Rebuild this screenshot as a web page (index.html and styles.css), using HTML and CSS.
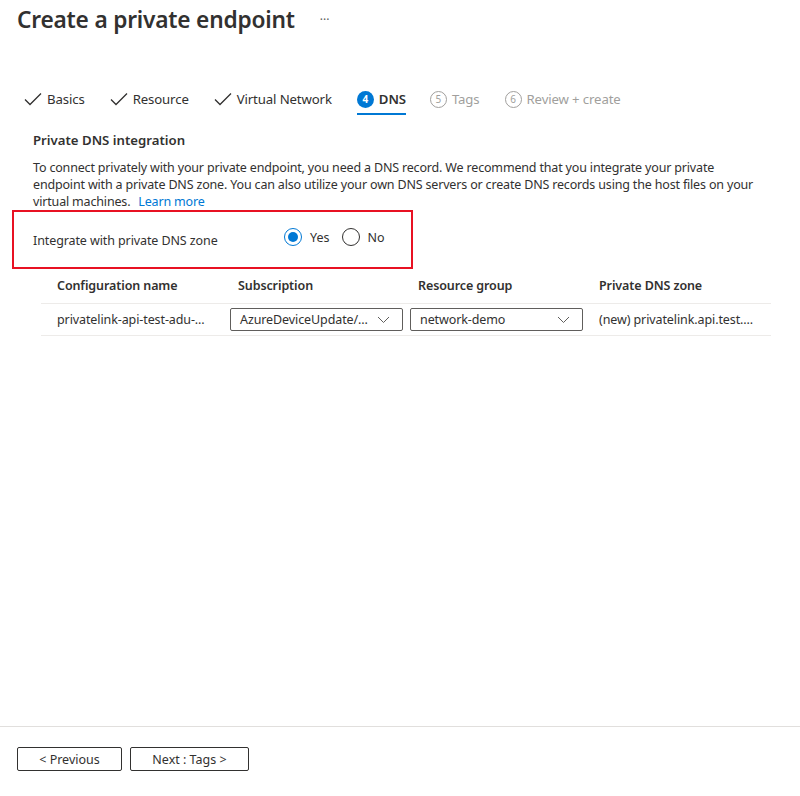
FILE: index.html
```html
<!DOCTYPE html>
<html>
<head>
<meta charset="utf-8">
<link rel="stylesheet" href="styles.css">
</head>
<body>
<div class="page">
  <main class="main">
    <header class="header">
      <h1 class="title">Create a private endpoint</h1>
      <span class="more">···</span>
    </header>
    <nav class="tabs">
      <div class="tab done"><svg class="check" width="18" height="14" viewBox="0 0 18 14"><path d="M1 7.5 L6 12.5 L17 1.5" fill="none" stroke="#323130" stroke-width="1.3"/></svg><span>Basics</span></div>
      <div class="tab done"><svg class="check" width="18" height="14" viewBox="0 0 18 14"><path d="M1 7.5 L6 12.5 L17 1.5" fill="none" stroke="#323130" stroke-width="1.3"/></svg><span>Resource</span></div>
      <div class="tab done"><svg class="check" width="18" height="14" viewBox="0 0 18 14"><path d="M1 7.5 L6 12.5 L17 1.5" fill="none" stroke="#323130" stroke-width="1.3"/></svg><span>Virtual Network</span></div>
      <div class="tab active"><span class="num">4</span><span>DNS</span></div>
      <div class="tab todo"><span class="num">5</span><span>Tags</span></div>
      <div class="tab todo"><span class="num">6</span><span>Review + create</span></div>
    </nav>
    <section class="content">
      <h2 class="section-title">Private DNS integration</h2>
      <p class="desc">To connect privately with your private endpoint, you need a DNS record. We recommend that you integrate your private endpoint with a private DNS zone. You can also utilize your own DNS servers or create DNS records using the host files on your virtual machines.<a class="link" href="#">Learn more</a></p>
      <div class="highlight">
        <span class="label">Integrate with private DNS zone</span>
        <div class="radios">
          <label class="radio"><span class="dot checked"></span><span>Yes</span></label>
          <label class="radio"><span class="dot"></span><span>No</span></label>
        </div>
      </div>
      <div class="table">
        <div class="row head">
          <div class="cell c1">Configuration name</div>
          <div class="cell c2">Subscription</div>
          <div class="cell c3">Resource group</div>
          <div class="cell c4">Private DNS zone</div>
        </div>
        <div class="row body-row">
          <div class="cell c1">privatelink-api-test-adu-...</div>
          <div class="cell c2"><div class="select"><span>AzureDeviceUpdate/...</span><svg width="13" height="8" viewBox="0 0 13 8"><path d="M1 1 L6.5 6.5 L12 1" fill="none" stroke="#605e5c" stroke-width="1"/></svg></div></div>
          <div class="cell c3"><div class="select"><span>network-demo</span><svg width="13" height="8" viewBox="0 0 13 8"><path d="M1 1 L6.5 6.5 L12 1" fill="none" stroke="#605e5c" stroke-width="1"/></svg></div></div>
          <div class="cell c4">(new) privatelink.api.test....</div>
        </div>
      </div>
    </section>
  </main>
  <footer class="footer">
    <button class="btn prev">&lt; Previous</button>
    <button class="btn next">Next : Tags &gt;</button>
  </footer>
</div>
</body>
</html>
```
FILE: styles.css
```css
* { box-sizing: border-box; }
html, body { margin: 0; padding: 0; background: #fff; }
body {
  font-family: "Noto Sans", "Open Sans", sans-serif;
  color: #323130;
  font-size: 13px;
}
.page {
  height: 796px;
  display: flex;
  flex-direction: column;
}
.main { flex: 1; }
.header {
  display: flex;
  align-items: center;
  padding: 4px 17px 0 17px;
  height: 34px;
}
.title {
  margin: 0;
  font-size: 22.7px;
  font-weight: 600;
  letter-spacing: -0.2px;
  color: #323130;
}
.more {
  margin-left: 25px;
  font-size: 12px;
  color: #605e5c;
}
.tabs {
  display: flex;
  margin-top: 51px;
  padding-left: 24px;
}
.tab {
  display: flex;
  align-items: center;
  height: 30px;
  font-size: 13.2px;
  letter-spacing: -0.12px;
  margin-right: 25px;
  border-bottom: 2px solid transparent;
}
.tab .check { margin-right: 5px; }
.tab .num {
  width: 17px;
  height: 17px;
  border-radius: 50%;
  display: inline-flex;
  align-items: center;
  justify-content: center;
  font-size: 10px;
  font-weight: 700;
  letter-spacing: 0;
  margin-right: 5px;
}
.tab.active { border-bottom-color: #0078d4; font-weight: 600; margin-right: 24px; }
.tab.active .num { background: #0078d4; color: #fff; }
.tab.todo { color: #a19f9d; }
.tab.todo .num { border: 1px solid #a19f9d; color: #a19f9d; font-weight: 400; }
.content { padding: 0 33px; }
.section-title {
  margin: 15px 0 0 0;
  font-size: 13.2px;
  font-weight: 600;
  line-height: 20px;
}
.desc {
  margin: 9px 0 0 0;
  line-height: 17px;
  font-size: 12.5px;
  letter-spacing: -0.17px;
}
.link { color: #0078d4; text-decoration: none; margin-left: 8px; }
.highlight {
  margin: 0 0 0 -21px;
  width: 401px;
  height: 59px;
  border: 2px solid #e81123;
  display: flex;
  align-items: center;
  padding-left: 19px;
}
.label { width: 251px; font-size: 12.5px; letter-spacing: -0.1px; padding-top: 1px; }
.radios { display: flex; gap: 12px; padding-bottom: 5px; }
.radio { display: flex; align-items: center; gap: 8px; font-size: 12.5px; }
.dot {
  width: 18px; height: 18px; border-radius: 50%;
  border: 1px solid #323130;
  display: inline-flex; align-items: center; justify-content: center;
}
.dot.checked { border-color: #0078d4; }
.dot.checked::after {
  content: ""; width: 10px; height: 10px; border-radius: 50%; background: #0078d4;
}
.table { margin: 4px 0 0 8px; width: 730px; }
.row { display: flex; }
.row.head { height: 31px; border-bottom: 1px solid #edebe9; font-weight: 600; align-items: flex-start; padding-top: 4px; }
.row.body-row { height: 32px; border-bottom: 1px solid #edebe9; align-items: center; }
.cell { font-size: 12.5px; letter-spacing: -0.1px; }
.c1 { width: 189px; padding-left: 16px; }
.c2 { width: 180px; }
.c3 { width: 181px; }
.c4 { flex: 1; }
.row.head .c2, .row.head .c3, .row.head .c4, .row.body-row .c4 { padding-left: 8px; }
.select {
  width: 173px;
  height: 23px;
  border: 1px solid #605e5c;
  border-radius: 2px;
  display: flex;
  align-items: center;
  justify-content: space-between;
  padding: 0 12px 0 9px;
}
.footer {
  border-top: 1px solid #e1dfdd;
  height: 70px;
  padding: 20px 17px 0 17px;
  display: flex;
  gap: 8px;
  align-items: flex-start;
}
.btn {
  font-family: inherit;
  font-size: 12.5px;
  color: #323130;
  background: #fff;
  border: 1px solid #323130;
  border-radius: 2px;
  height: 24px;
  padding: 0;
}
.btn.prev { width: 105px; }
.btn.next { width: 119px; }
```
